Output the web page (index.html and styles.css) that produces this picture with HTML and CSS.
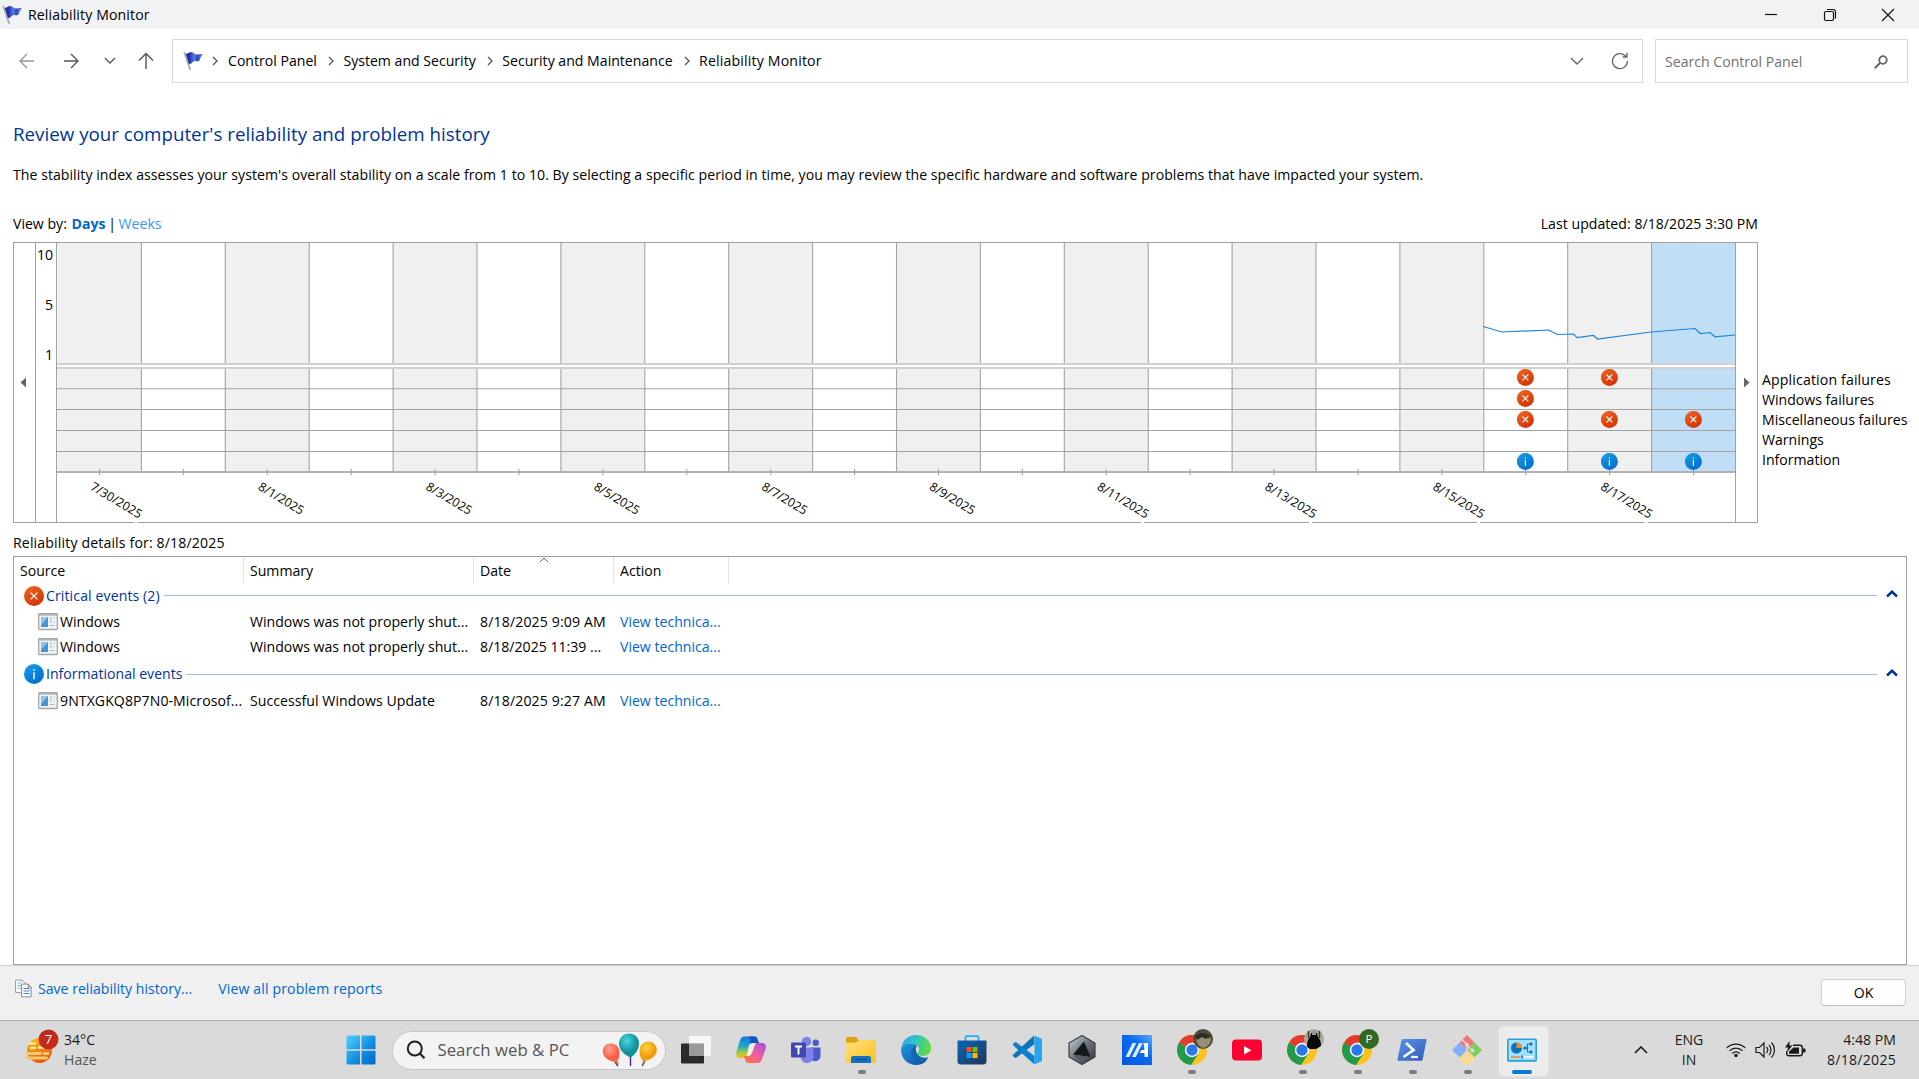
FILE: index.html
```html
<!DOCTYPE html>
<html lang="en">
<head>
<meta charset="utf-8">
<title>Reliability Monitor</title>
<link rel="stylesheet" href="styles.css">
</head>
<body>
<svg class="defs" width="0" height="0" aria-hidden="true">
  <defs>
    <linearGradient id="gFlag" x1="0" x2="1"><stop offset="0" stop-color="#1a2690"/><stop offset=".22" stop-color="#2433b0"/><stop offset=".5" stop-color="#5a7ce6"/><stop offset=".68" stop-color="#2a48c0"/><stop offset="1" stop-color="#6f92f0"/></linearGradient>
    <linearGradient id="gErr" x1="0" y1="0" x2=".6" y2="1"><stop offset="0" stop-color="#f0682c"/><stop offset="1" stop-color="#d43400"/></linearGradient>
    <linearGradient id="gInfo" x1="0" y1="0" x2=".6" y2="1"><stop offset="0" stop-color="#1ba0e8"/><stop offset="1" stop-color="#0070d0"/></linearGradient>
    <linearGradient id="gWin" x1="0" y1="0" x2="1" y2="1"><stop offset="0" stop-color="#4fd3ff"/><stop offset=".55" stop-color="#148fe0"/><stop offset="1" stop-color="#0069c8"/></linearGradient>
    <linearGradient id="gSun" x1="0" y1="0" x2=".3" y2="1"><stop offset="0" stop-color="#fcc010"/><stop offset="1" stop-color="#e8590c"/></linearGradient>
    <linearGradient id="gFolder" x1="0" y1="0" x2="1" y2="1"><stop offset="0" stop-color="#ffe07a"/><stop offset="1" stop-color="#fcc022"/></linearGradient>
    <linearGradient id="gEdge" x1="0" y1="0" x2="1" y2=".3"><stop offset="0" stop-color="#2aa5e8"/><stop offset=".5" stop-color="#2fc3c8"/><stop offset="1" stop-color="#5fd94a"/></linearGradient>
    <linearGradient id="gEdge2" x1="0" y1="0" x2="1" y2="1"><stop offset="0" stop-color="#1a9be0"/><stop offset="1" stop-color="#0c4f9c"/></linearGradient>
    <linearGradient id="gStore" x1="0" y1="0" x2="1" y2="1"><stop offset="0" stop-color="#0a66b8"/><stop offset="1" stop-color="#243558"/></linearGradient>
    <linearGradient id="gCop1" x1="0" y1="0" x2="0" y2="1"><stop offset="0" stop-color="#1279e0"/><stop offset=".45" stop-color="#1aa8c8"/><stop offset=".75" stop-color="#a8c83a"/><stop offset="1" stop-color="#f0c020"/></linearGradient>
    <linearGradient id="gCop2" x1="1" y1="0" x2="0" y2="1"><stop offset="0" stop-color="#9a50e8"/><stop offset=".5" stop-color="#f0609a"/><stop offset="1" stop-color="#ff7a30"/></linearGradient>
    <linearGradient id="gMy" x1="0" y1="1" x2="1" y2="0"><stop offset="0" stop-color="#0058e0"/><stop offset=".6" stop-color="#0a6cf0"/><stop offset="1" stop-color="#58a8ff"/></linearGradient>
    <linearGradient id="gPs" x1="0" y1="0" x2="1" y2="1"><stop offset="0" stop-color="#5b93ec"/><stop offset="1" stop-color="#2f5cb8"/></linearGradient>
    <linearGradient id="gHex" x1="0" y1="0" x2="1" y2="1"><stop offset="0" stop-color="#d0d8e0"/><stop offset=".5" stop-color="#6a727a"/><stop offset="1" stop-color="#2c2e32"/></linearGradient>
    <radialGradient id="gB1" cx=".4" cy=".3"><stop offset="0" stop-color="#ffa090"/><stop offset="1" stop-color="#fa6048"/></radialGradient>
    <radialGradient id="gB2" cx=".4" cy=".3"><stop offset="0" stop-color="#48d8e0"/><stop offset="1" stop-color="#10909c"/></radialGradient>
    <radialGradient id="gB3" cx=".4" cy=".3"><stop offset="0" stop-color="#ffd040"/><stop offset="1" stop-color="#ee9c10"/></radialGradient>
    <symbol id="flag" viewBox="0 0 20 20">
      <path d="M.3 1.200 2 .7 8.200 18.600l-1.800.6z" fill="#aeb0b2"/>
      <path d="M2.800 3C5 2.600 6 .8 8.500.9c2.300.2 2.700 2.300 5 2.500 2 .2 3.800-.7 6.300-.2-.8 1.800-2.200 2.800-2.600 4.400-.4 1.500-.7 2.400-1.500 2.600-1.700.4-3.200-.6-4.700 0-1.700.7-2.600 2.700-5 3.100z" fill="url(#gFlag)"/>
    </symbol>
    <symbol id="err" viewBox="0 0 20 20"><circle cx="10" cy="10" r="10" fill="url(#gErr)"/><path d="M6.600 6.600l6.800 6.800M13.400 6.600l-6.800 6.800" stroke="#fff" stroke-width="1.300"/></symbol>
    <symbol id="info" viewBox="0 0 20 20"><circle cx="10" cy="10" r="10" fill="url(#gInfo)"/><path d="M10 8.300v7M10 5v1.700" stroke="#fff" stroke-width="1.400"/></symbol>
    <symbol id="app" viewBox="0 0 20 18">
      <rect x=".7" y=".7" width="18.600" height="15.800" rx=".8" fill="#f2f3f4" stroke="#a2a6aa" stroke-width="1.300"/><path d="M1 1.800h18" stroke="#b0b3b6" stroke-width="1.600"/><rect x="3" y="4" width="7" height="10" fill="#4794d2"/><path d="M3 4h7L3 12z" fill="#8cc4ee"/><path d="M11.500 5h2.500M11.500 7h2.500M11.500 9h2.500M15.500 5H17M15.500 9H17M11.500 12.500h5.500" stroke="#b4bec8" stroke-width="1.100"/>
    </symbol>
    <symbol id="chrome" viewBox="0 0 30 30">
      <circle cx="15" cy="15" r="15" fill="#fcc31e"/><path d="M15 15 2 7.500a15 15 0 0 0 12 22.460L21.500 18.700z" fill="#229a4c"/><path d="M2 7.500A15 15 0 0 1 28 7.500H15V15z" fill="#e33b2e"/><circle cx="15" cy="15" r="7.200" fill="#fff"/><circle cx="15" cy="15" r="5.700" fill="#2b78ea"/>
    </symbol>
  </defs>
</svg>

<div class="window">
  <header class="titlebar">
    <svg class="title-flag" width="20" height="20"><use href="#flag"/></svg>
    <span class="title">Reliability Monitor</span>
    <div class="controls">
      <svg width="14" height="14" viewBox="0 0 14 14"><path d="M1 6.500h12"/></svg>
      <svg width="14" height="14" viewBox="0 0 14 14"><rect x="1.500" y="3.500" width="9" height="9" rx="1.500"/><path d="M4 1.500h6a2.500 2.500 0 0 1 2.500 2.500v6.500"/></svg>
      <svg width="14" height="14" viewBox="0 0 14 14"><path d="M1 1l12 12M13 1 1 13"/></svg>
    </div>
  </header>

  <nav class="navbar">
    <div class="arrows">
      <svg class="dim" width="16" height="18" viewBox="0 0 16 18"><path d="M15 9H1M8 2 1 9l7 7"/></svg>
      <svg width="16" height="18" viewBox="0 0 16 18"><path d="M1 9h14M8 2l7 7-7 7"/></svg>
      <svg width="12" height="18" viewBox="0 0 12 18"><path d="M1 6l5 5 5-5"/></svg>
      <svg width="16" height="18" viewBox="0 0 16 18"><path d="M8 17V1.500M1 8.500l7-7 7 7"/></svg>
    </div>
    <div class="address">
      <svg width="20" height="20"><use href="#flag"/></svg>
      <svg class="sep s0" width="6" height="10" viewBox="0 0 6 10"><path d="M1 1l4 4-4 4"/></svg>
      <span class="c1">Control Panel</span>
      <svg class="sep" width="6" height="10" viewBox="0 0 6 10"><path d="M1 1l4 4-4 4"/></svg>
      <span class="c2">System and Security</span>
      <svg class="sep" width="6" height="10" viewBox="0 0 6 10"><path d="M1 1l4 4-4 4"/></svg>
      <span class="c3">Security and Maintenance</span>
      <svg class="sep" width="6" height="10" viewBox="0 0 6 10"><path d="M1 1l4 4-4 4"/></svg>
      <span class="c4">Reliability Monitor</span>
      <svg class="drop" width="14" height="8" viewBox="0 0 14 8"><path d="M1 1l6 6 6-6"/></svg>
      <svg class="reload" width="18" height="18" viewBox="0 0 18 18"><path d="M16.500 9A7.500 7.500 0 1 1 14 3.500L16 5M16 .8V5h-4.200"/></svg>
    </div>
    <div class="search"><span>Search Control Panel</span>
      <svg width="14" height="14" viewBox="0 0 14 14"><circle cx="9" cy="5" r="3.800" fill="none" stroke="#666" stroke-width="1.800"/><path d="M6.300 7.700.8 13.200" stroke="#666" stroke-width="2"/></svg>
    </div>
  </nav>

  <main class="content">
    <h1>Review your computer's reliability and problem history</h1>
    <p class="desc">The stability index assesses your system's overall stability on a scale from 1 to 10. By selecting a specific period in time, you may review the specific hardware and software problems that have impacted your system.</p>
    <div class="viewrow">
      <div>View by: <b>Days</b> | <span class="weeks">Weeks</span></div>
      <div class="updated">Last updated: 8/18/2025 3:30 PM</div>
    </div>
    <div class="chartrow">
      <svg class="chart" id="chart" width="1745" height="281" viewBox="13 242 1745 281"></svg>
      <ul class="legend"><li class="wide">Application failures</li><li>Windows failures</li><li>Miscellaneous failures</li><li>Warnings</li><li>Information</li></ul>
    </div>
    <div class="details-label">Reliability details for: 8/18/2025</div>
    <section class="list">
      <div class="row head"><span>Source</span><span>Summary</span><span>Date<svg class="sort" width="10" height="6" viewBox="0 0 10 6"><path d="M1 5l4-4 4 4"/></svg></span><span>Action</span></div>
      <div class="group"><svg width="20" height="20"><use href="#err"/></svg><span class="g1">Critical events (2)</span><i></i><svg class="up" width="12" height="8" viewBox="0 0 12 8"><path d="M1 6.500 6 1.800l5 4.700"/></svg></div>
      <div class="row"><span><svg width="20" height="18"><use href="#app"/></svg>Windows</span><span>Windows was not properly shut...</span><span class="wide">8/18/2025 9:09 AM</span><span class="link">View technica...</span></div>
      <div class="row"><span><svg width="20" height="18"><use href="#app"/></svg>Windows</span><span>Windows was not properly shut...</span><span>8/18/2025 11:39 ...</span><span class="link">View technica...</span></div>
      <div class="group second"><svg width="20" height="20"><use href="#info"/></svg><span class="g2">Informational events</span><i></i><svg class="up" width="12" height="8" viewBox="0 0 12 8"><path d="M1 6.500 6 1.800l5 4.700"/></svg></div>
      <div class="row"><span class="long"><svg width="20" height="18"><use href="#app"/></svg>9NTXGKQ8P7N0-Microsof...</span><span class="upd">Successful Windows Update</span><span class="wide">8/18/2025 9:27 AM</span><span class="link">View technica...</span></div>
    </section>
  </main>

  <footer class="footer">
    <svg width="17" height="19" viewBox="0 0 17 19"><path d="M.6 1.100h6.500l3 3v9.500H.6z" fill="#fff" stroke="#999"/><path d="M2.500 4h4M2.500 6.500h4M2.500 9h4" stroke="#7fb0e6"/><path d="M6.600 5.100h6.500l3 3v9.800H6.600z" fill="#fff" stroke="#888"/><path d="M13 5v3.200h3" fill="none" stroke="#888"/><path d="M8.500 9.500h6M8.500 12h6M8.500 14.500h6" stroke="#3f86dc"/></svg>
    <span class="link save">Save reliability history...</span>
    <span class="link all">View all problem reports</span>
    <button>OK</button>
  </footer>
</div>

<div class="taskbar">
  <div class="weather">
    <svg width="36" height="36" viewBox="0 0 36 36"><circle cx="16.500" cy="21.500" r="12.500" fill="url(#gSun)"/><path d="M7 14.500h5M16 18.500h9M8 19h4" stroke="#ffe9a8" stroke-width="2.600" stroke-linecap="round"/><path d="M3.500 24.500h14M21 24.500h4M3.500 29h20" stroke="#efc878" stroke-width="2.800" stroke-linecap="round"/><circle cx="25.500" cy="10.500" r="10" fill="#c42b1c"/><text x="25.500" y="15" text-anchor="middle" font-size="13" fill="#fff">7</text></svg>
    <div><div>34°C</div><div class="haze">Haze</div></div>
  </div>
  <svg class="start" width="30" height="30" viewBox="0 0 30 30"><path d="M.5 2A1.500 1.500 0 0 1 2 .5h12v13.700H.5zM15.500.5H28A1.500 1.500 0 0 1 29.500 2v12.200h-14zM.5 15.700H14v13.800H2A1.500 1.500 0 0 1 .5 28zM15.500 15.700h14V28a1.500 1.500 0 0 1-1.500 1.500H15.500z" fill="url(#gWin)"/></svg>
  <div class="tsearch">
    <svg width="20" height="20" viewBox="0 0 20 20"><circle cx="8.800" cy="8.500" r="7" fill="none" stroke="#222" stroke-width="2"/><path d="M13.800 13.500l4.700 4.700" stroke="#222" stroke-width="2.300"/></svg>
    <span>Search web &amp; PC</span>
    <svg class="balloons" width="56" height="34" viewBox="0 0 56 34"><path d="M13 29l3 4M28.500 24v9M43 28l-3 5" stroke="#4a2a90" stroke-width="1.400"/><path d="M14.500 28l2.500 2.500-4 .5z" fill="#e0542c"/><path d="M42 27l1 3.500-3-1z" fill="#d8860c"/><path d="M.8 18.500C.8 13.500 4.500 10 9.500 10.500c5 .4 8 4.200 8 9 0 5-1.500 8.500-3 9.500C9 29 .8 25 .8 18.500z" fill="url(#gB1)"/><path d="M54.800 17.500c0-5-3.400-9-8.400-9s-8.900 3.500-8.900 9c0 5.500 2 9.500 4 10.500 6-.5 13.300-4.500 13.300-10.500z" fill="url(#gB3)"/><path d="M37 10.500c0-6-4.500-10-10-10s-10 4.500-10 10c0 6 5 11.500 11.500 14C33 22 37 16.500 37 10.500z" fill="url(#gB2)"/></svg>
  </div>
  <div class="apps">
    <div class="a"><svg width="30" height="30" viewBox="0 0 30 30"><rect x="0" y="8.500" width="23" height="20" rx="1" fill="#2b2b2b"/><rect x="8" y="1" width="22" height="20" rx="1" fill="#fff" opacity=".78"/><path d="M8 8.500h15V21H8z" fill="#9a9a9a"/></svg></div>
    <div class="a"><svg width="30" height="30" viewBox="0 0 30 30"><path d="M8.500 1.500h9.500c2.500 0 3.200 1.500 4 4l1 3h-4c-3 0-4.200 1.600-5 4.200L11.500 19c-1 3-2 4-4.500 4H4c-3.500 0-4.600-2.500-3.600-6L4 5.500C5 2.700 6 1.500 8.500 1.500z" fill="url(#gCop1)"/><path d="M13 1.500h5c2.500 0 3.200 1.500 4 4l1 3h-4c-2 0-3 .5-4 2z" fill="#1850c8"/><path d="M21.500 28H13c-2.500 0-3.500-1.500-4.200-4L8 21h3.500c3 0 4-1.500 4.800-4.200L18.300 11c.8-2.500 1.700-3 4.200-3H26c3.500 0 4.600 2.500 3.600 6L26 24c-1 2.700-2 4-4.500 4z" fill="url(#gCop2)"/><path d="M13 10.500c.8-2 2.500-2.500 5-2.500l2.500.3c-1.200.6-1.800 1.600-2.200 2.700l-2 5.800c-.8 2.700-1.800 4-4.300 4.200l-1.500-.5z" fill="#f0eee8"/></svg></div>
    <div class="a"><svg width="30" height="30" viewBox="0 0 30 30"><circle cx="15.500" cy="6.500" r="4.700" fill="#7b83eb"/><circle cx="24.800" cy="7.800" r="3.200" fill="#5059c9"/><path d="M20 12.500h9.500v9a5.500 5.500 0 0 1-9.500 3z" fill="#5059c9"/><path d="M10 12.500h12.500V22a6.500 6.500 0 0 1-12.500 2z" fill="#7b83eb"/><rect x="0" y="7.500" width="15" height="15" rx="1.200" fill="#4048b0"/><path d="M4 11.500h7M7.500 11.500v8" stroke="#fff" stroke-width="1.900"/></svg></div>
    <div class="a run"><svg width="30" height="30" viewBox="0 0 30 30"><path d="M0 3.500A1.500 1.500 0 0 1 1.500 2h8.500l3 3.500H24v5H0z" fill="#e0a010"/><path d="M0 7.500h10L13 5h15.500A1.500 1.500 0 0 1 30 6.500v20a1.500 1.500 0 0 1-1.500 1.500h-27A1.500 1.500 0 0 1 0 26.500z" fill="url(#gFolder)"/><path d="M5 28v-5a2 2 0 0 1 2-2h16a2 2 0 0 1 2 2v5z" fill="#1474c4"/><path d="M9 24.500h12" stroke="#0c4c8c" stroke-width="1.300"/></svg></div>
    <div class="a"><svg width="30" height="30" viewBox="0 0 30 30"><path d="M.3 13C1.500 5 7.500 0 15 0c8.500 0 15 6 15 13 0 5-3.500 8-8 8-3 0-5.500-1-5.500-2.500 0-1 1.500-1.700 1.500-4C18 11 14.500 8.500 10 8.500c-5 0-8.500 2-9.700 4.500z" fill="url(#gEdge)"/><path d="M.1 14C1 10.500 5 8.300 10 8.500c2.500 0 4.500.7 6 2-3.500.3-5 3-5 6 0 6 6 9.500 11 8.500 2-.4 3.500-1.200 5-2C25 27.500 20.500 30 15 30 6.500 30-.5 23 .1 14z" fill="url(#gEdge2)"/><path d="M16 10.500c-4 0-6.500 4-5.500 8.500 1 5.500 6.500 8 11.500 6.500 2-.5 4-1.500 5.200-3.500-2.500 1-5.200.8-7.400-.2C15.500 20 13.500 14.500 16 10.500z" fill="#1465ae"/></svg></div>
    <div class="a"><svg width="30" height="30" viewBox="0 0 30 30"><path d="M8.500 7V2.500A1.300 1.300 0 0 1 9.800 1.200h10.400a1.300 1.300 0 0 1 1.300 1.300V7" fill="none" stroke="#22b0f0" stroke-width="1.700"/><path d="M.5 5.500h29V26a3.500 3.500 0 0 1-3.500 3.500H4A3.500 3.500 0 0 1 .5 26z" fill="url(#gStore)"/><path d="M9.500 12h5v5h-5z" fill="#f25022"/><path d="M15.500 12h5v5h-5z" fill="#7fba00"/><path d="M9.500 18h5v5h-5z" fill="#00a4ef"/><path d="M15.500 18h5v5h-5z" fill="#ffb900"/></svg></div>
    <div class="a"><svg width="30" height="30" viewBox="0 0 30 30"><path d="M22 .5 3.500 17.500.5 20.500l2 2c.6.5 1.400.4 2 0L22.500 9z" fill="#0b74bc"/><path d="M22.500 29.500 3.500 12.500.5 9.500l2-2c.6-.5 1.400-.4 2 0L22.500 21z" fill="#0c80cc"/><path d="M21.500.3 30 4v22l-8.500 3.800c1 .3 1-1 1-1.800V2c0-1 0-2-1-1.700z" fill="#23a5f2"/></svg></div>
    <div class="a"><svg width="30" height="30" viewBox="0 0 30 30"><path d="M15 .5 28 8v14l-13 7.500L2 22V8z" fill="url(#gHex)" stroke="#3a3e44" stroke-width="1.200"/><path d="M17 6.500 23.500 22 6 19.500z" fill="#15171a"/><path d="M6 19.500l17.500 2.500-9 5z" fill="#555b61"/></svg></div>
    <div class="a"><svg width="30" height="30" viewBox="0 0 30 30"><path d="M0 0h30v30H0z" fill="url(#gMy)"/><path d="M3.500 22 10.500 8h3.800l-7 14zM10 22l7-14h3.800l-7 14z" fill="#dcebff"/><path d="M21.500 8h4.500v14h-3.500v-4h-5l2-3h3z" fill="#fff"/></svg></div>
    <div class="a run"><svg width="30" height="30"><use href="#chrome"/></svg><svg class="badge" width="20" height="20" viewBox="0 0 20 20"><circle cx="10" cy="10" r="10" fill="#4c4a38"/><path d="M3 10q3-4 7-2t8 1q0 8-8 10-6-2-7-9z" fill="#9a8d76"/><path d="M2 7q8-6 15 0l-4 3-4-2-5 3z" fill="#2e2c24"/></svg></div>
    <div class="a"><svg width="30" height="30" viewBox="0 0 30 30"><rect x="0" y="4.500" width="30" height="21" rx="4" fill="#ff0033"/><path d="M12 11v8.500l7.500-4.200z" fill="#fff"/></svg></div>
    <div class="a run"><svg width="30" height="30"><use href="#chrome"/></svg><svg class="badge" width="20" height="20" viewBox="0 0 20 20"><circle cx="10" cy="10" r="10" fill="#b0a89e"/><path d="M3 18q0-7 3-10l1-4h6l1 4q3 3 3 9l-5 3H6z" fill="#080808"/><path d="M4.500 2v7M15.500 2v7" stroke="#3a3834" stroke-width="1.500"/><path d="M8 2h4v4H8z" fill="#999"/></svg></div>
    <div class="a run"><svg width="30" height="30"><use href="#chrome"/></svg><svg class="badge" width="20" height="20" viewBox="0 0 20 20"><circle cx="10" cy="10" r="10" fill="#33691e"/><text x="10" y="14.200" text-anchor="middle" font-size="11.500" fill="#fff">P</text></svg></div>
    <div class="a run"><svg width="30" height="30" viewBox="0 0 30 30"><path d="M5.500 4h23a1 1 0 0 1 1 1.200L25.500 25a1 1 0 0 1-1 .8H1.500a1 1 0 0 1-1-1.200L4.500 5a1 1 0 0 1 1-1z" fill="url(#gPs)"/><path d="M9 8l7.500 7L6.500 22" fill="none" stroke="#fff" stroke-width="2.600"/><path d="M14 22h7" stroke="#fff" stroke-width="2.200"/></svg></div>
    <div class="a run"><svg width="30" height="30" viewBox="0 0 30 30"><path d="M15 0 22.500 7.500 15 15 7.500 7.500z" fill="#f0767a"/><path d="M30 15l-7.500 7.500L15 15l7.500-7.500z" fill="#80cc58"/><path d="M15 30 7.500 22.500 15 15l7.500 7.500z" fill="#ffdc78"/><path d="M0 15l7.500-7.500L15 15l-7.500 7.500z" fill="#84b0fa"/><path d="M10 4.500l5 5v12M15 10.500l5 4.500" fill="none" stroke="#dadada" stroke-width="1.600"/><circle cx="15" cy="10" r="2" fill="#dadada"/><circle cx="15" cy="21.500" r="2" fill="#dadada"/><circle cx="20.500" cy="15.500" r="2" fill="#dadada"/></svg></div>
    <div class="a active"><svg width="30" height="30" viewBox="0 0 30 30"><rect x=".8" y="4.300" width="28.400" height="21.600" rx="1" fill="#9fe0fa" stroke="#2a9fd8" stroke-width="1.600"/><circle cx="9.500" cy="13" r="5.500" fill="#0f6fc4"/><path d="M9.500 13V7.500A5.500 5.500 0 0 1 15 13z" fill="#f0921e"/><path d="M17 13h3.500M20.500 9v8M20.500 9h3M20.500 17h3" fill="none" stroke="#2070b0" stroke-width="1.100"/><circle cx="24" cy="9" r="1.600" fill="#1a6db8"/><circle cx="24" cy="17" r="1.600" fill="#1a6db8"/><circle cx="18" cy="13" r="1.600" fill="#1a6db8"/><path d="M4 22h9" stroke="#f0921e" stroke-width="1.600"/><path d="M17 22h9" stroke="#fff" stroke-width="1.600"/><path d="M15 20.500v3" stroke="#1a6db8" stroke-width="1.600"/></svg></div>
  </div>
  <div class="tray">
    <svg class="caret" width="14" height="8" viewBox="0 0 14 8"><path d="M1 7l6-6 6 6" fill="none" stroke="#1b1b1b" stroke-width="1.600"/></svg>
    <div class="lang"><div>ENG</div><div>IN</div></div>
    <svg class="wifi" width="20" height="16" viewBox="0 0 20 16"><path d="M.8 6a13 13 0 0 1 18.400 0M3.500 8.800a9.200 9.200 0 0 1 13 0M6.200 11.500a5.400 5.400 0 0 1 7.600 0" fill="none" stroke="#1b1b1b" stroke-width="1.200"/><circle cx="10" cy="13.500" r="1.700" fill="#1b1b1b"/></svg>
    <svg class="vol" width="21" height="18" viewBox="0 0 21 18"><path d="M1 6.500h3.500L9 2v14l-4.500-4.500H1z" fill="none" stroke="#1b1b1b" stroke-width="1.200"/><path d="M11.500 6a4.500 4.500 0 0 1 0 6M14 3.800a7.800 7.800 0 0 1 0 10.400M16.500 1.500a11 11 0 0 1 0 15" fill="none" stroke="#1b1b1b" stroke-width="1.200"/></svg>
    <svg class="bat" width="21" height="18" viewBox="0 0 21 18"><path d="M8 4.200h7a2.300 2.300 0 0 1 2.300 2.300v6a2.300 2.300 0 0 1-2.300 2.300H4a2.300 2.300 0 0 1-2.300-2.300V10" fill="none" stroke="#1b1b1b" stroke-width="1.400"/><path d="M18 7.500h1.500a1 1 0 0 1 1 1v2a1 1 0 0 1-1 1H18z" fill="#1b1b1b"/><path d="M8.500 6.500H14v6.300H4V10.500z" fill="#1b1b1b"/><path d="M4.500 0 0 6.500h3L2 11l5.500-6.500h-3z" fill="#1b1b1b"/></svg>
    <div class="clock"><div class="time">4:48 PM</div><div class="day">8/18/2025</div></div>
  </div>
</div>
<script src="chart.js"></script>
</body>
</html>
```
FILE: chart.js
```js
const NS = 'http://www.w3.org/2000/svg';
const chart = document.getElementById('chart');
const X0 = 57.4, STEP = 83.9, COLS = 20;

function add(tag, attrs, text) {
  const el = document.createElementNS(NS, tag);
  for (const k in attrs) el.setAttribute(k, attrs[k]);
  if (text) el.textContent = text;
  chart.appendChild(el);
}
function line(x1, y1, x2, y2, cls) { add('path', { d: `M${x1} ${y1}L${x2} ${y2}`, class: cls }); }

// Alternating day columns; the last one is selected.
for (let i = 0; i < COLS; i++) {
  const fill = i === COLS - 1 ? '#c0def6' : i % 2 === 0 ? '#f0f0f0' : '#fff';
  const x = X0 + i * STEP;
  add('rect', { x, y: 243, width: STEP, height: 121, fill });
  add('rect', { x, y: 368, width: STEP, height: 104, fill });
  if (i > 0) {
    line(x + 0.1, 243, x + 0.1, 364, 'grid');
    line(x + 0.1, 368, x + 0.1, 472, 'grid');
  }
}
[388.8, 409.5, 430.5, 451.5].forEach(y => line(57, y, 1735, y, 'grid'));
[364, 368].forEach(y => line(57, y, 1735, y, 'soft'));
line(57, 472, 1735, 472, 'axis');
for (let i = 0; i < COLS; i++) line(X0 + 42.1 + i * STEP, 469, X0 + 42.1 + i * STEP, 475, 'grid');

// Frame and scroll strips
add('rect', { x: 13.5, y: 242.5, width: 1744, height: 280, class: 'frame' });
[35.5, 56.5, 1735.5].forEach(x => line(x, 242, x, 523, 'frame'));
add('path', { d: 'M26 377.5v10l-5.500-5z', fill: '#666' });
add('path', { d: 'M1744 377.500v10l5.500-5z', fill: '#666' });

add('text', { x: 53, y: 259.5, class: 'scale' }, '10');
add('text', { x: 53, y: 309.5, class: 'scale' }, '5');
add('text', { x: 53, y: 359.5, class: 'scale' }, '1');

['7/30', '8/1', '8/3', '8/5', '8/7', '8/9', '8/11', '8/13', '8/15', '8/17'].forEach((d, i) => {
  const x = 89.5 + i * STEP * 2;
  add('text', { transform: `translate(${x} 489) rotate(31)`, class: 'date' }, d + '/2025');
  if (d.length > 3) add('rect', { x: x + 45, y: 522, width: 3, height: 1, fill: '#fff' });
});

add('polyline', { class: 'trend', points: '1483,326.5 1502,332 1548.500,330 1557.500,334.500 1573.500,334 1577,337.700 1593.500,335.500 1597.500,339 1651,332 1695,328.500 1700.300,333.500 1710,332.500 1715,336.800 1735,335' });

[['err', 1525.4, 377.4], ['err', 1609.4, 377.4], ['err', 1525.4, 398.4], ['err', 1525.4, 419.4], ['err', 1609.4, 419.4], ['err', 1693.4, 419.4],
 ['info', 1525.4, 461.4], ['info', 1609.4, 461.4], ['info', 1693.4, 461.4]]
  .forEach(([id, x, y]) => add('use', { href: '#' + id, x: x - 8.5, y: y - 8.5, width: 17, height: 17 }));
```
FILE: styles.css
```css
* { box-sizing: border-box; }
body { margin: 0; width: 1919px; height: 1079px; overflow: hidden; background: #fff; color: #000; font: 14.1px/20px "Open Sans", "Noto Sans", sans-serif; display: flex; flex-direction: column; white-space: nowrap; }
.defs { position: absolute; }
svg { flex: none; display: block; }
.window { height: 1020px; display: flex; flex-direction: column; }
.titlebar { height: 29px; background: #f1f2f3; display: flex; align-items: center; padding: 0 24px 0 2px; }
.title { margin-left: 6px; letter-spacing: .13px; }
.controls { margin-left: auto; display: flex; gap: 44.500px; fill: none; stroke: #111; stroke-width: 1.2; }
.navbar { height: 55px; padding: 10px 11px 0 19px; display: flex; }
.arrows { width: 153px; display: flex; height: 44px; align-items: center; fill: none; stroke: #555; stroke-width: 1.4; }
.arrows svg:nth-child(2) { margin-left: 28px; }
.arrows svg:nth-child(3) { margin-left: 25px; }
.arrows svg:nth-child(4) { margin-left: 22px; }
.arrows .dim { stroke: #999; }
.address { width: 1471px; height: 44px; border: 1px solid #d9d9d9; display: flex; align-items: center; padding-left: 10px; }
.sep { fill: none; stroke: #555; stroke-width: 1.3; margin: 0 9.500px 0 11px; }
.s0 { margin: 0 10px 0 9px; }
.c4 { letter-spacing: .18px; }
.drop { margin-left: auto; fill: none; stroke: #666; stroke-width: 1.4; }
.reload { margin: 0 13px 0 27px; fill: none; stroke: #666; stroke-width: 1.3; }
.search { margin-left: 12px; width: 253px; height: 44px; border: 1px solid #d9d9d9; display: flex; align-items: center; justify-content: space-between; padding: 1px 19px 0 9px; color: #717171; }
.content { padding: 0 12px 0 13px; height: 881px; }
h1 { margin: 38px 0 0; font-size: 18.750px; line-height: 24px; font-weight: 400; color: #003399; }
.desc { margin: 19px 0 0; letter-spacing: .042px; }
.viewrow { margin-top: 29px; display: flex; justify-content: space-between; width: 1745px; }
.viewrow b { color: #0066cc; margin: 0 -1px 0 1px; }
.weeks { color: #3399ff; margin-left: -1px; }
.updated { letter-spacing: .03px; }
.chartrow { display: flex; margin-top: 8px; }
.legend { list-style: none; margin: 128px 0 0 4px; padding: 0; }
.legend .wide { letter-spacing: .15px; }
.chart text { font-family: "Open Sans", "Noto Sans", sans-serif; }
.grid { stroke: #a3a3a3; stroke-width: 1.1; fill: none; }
.soft { stroke: #d0d0d0; stroke-width: 2; }
.axis { stroke: #b2b2b2; stroke-width: 2; }
.frame { stroke: #a0a0a0; stroke-width: 1; fill: none; }
.scale { font-size: 14.1px; text-anchor: end; }
.date { font-size: 12.200px; }
.trend { fill: none; stroke: #1a86dc; stroke-width: 1.2; }
.details-label { margin-top: 10px; letter-spacing: .15px; }
.list { margin-top: 3px; height: 409px; border: 1px solid #a0a0a0; }
.row { display: grid; grid-template-columns: 230px 230px 140px 115px; height: 25px; align-items: center; }
.row > span { display: flex; align-items: center; padding-left: 6px; height: 100%; position: relative; }
.row:not(.head) > span:first-child { padding-left: 24px; }
.row span svg { margin-right: 2px; }
.row > .wide { letter-spacing: .14px; }
.row > .long { letter-spacing: .07px; }
.row > .upd { letter-spacing: .05px; }
.row.head { height: 27px; }
.row.head > span { border-right: 1px solid #e3e3e3; }
.row .sort { position: absolute; left: 65px; top: 0; fill: none; stroke: #666; }
.group { display: flex; align-items: center; height: 23px; margin-bottom: 2px; padding: 0 8px 0 10px; color: #003399; }
.group span { margin: 0 4px 0 2px; }
.g1 { letter-spacing: .1px; }
.group i { flex: 1; height: 1px; background: #aab8e0; }
.group .up { margin: -3px 0 0 9px; fill: none; stroke: #003399; stroke-width: 2.5; }
.group.second { height: 29px; margin: 0; padding-top: 1px; }
.link { color: #0066cc; }
.footer { height: 55px; background: #f0f0f0; border-top: 1px solid #d0d0d0; display: flex; padding: 13px 13px 0 15px; }
.save { margin-left: 6px; }
.all { margin-left: 26px; letter-spacing: .13px; }
.footer button { margin: 0 0 0 auto; width: 85px; height: 27px; border: 1px solid #d0d0d0; border-bottom-color: #bbb; border-radius: 4px; background: #fdfdfd; font: inherit; padding: 0; }
.taskbar { height: 59px; background: #dadada; border-top: 1px solid #adadad; display: flex; align-items: center; color: #1b1b1b; }
.taskbar text { font-family: "Open Sans", sans-serif; }
.weather { display: flex; width: 345.500px; padding-left: 23px; align-items: center; gap: 5px; }
.weather > svg { margin-top: -6px; }
.haze { color: #555; }
.tsearch { margin-left: 16px; width: 274px; height: 39px; background: #f3f3f3; border: 1px solid #c6c6c6; border-radius: 20px; display: flex; align-items: center; padding: 0 7px 0 13px; font-size: 16.800px; color: #555; }
.tsearch span { margin-left: 12px; }
.balloons { margin-left: auto; }
.apps { display: flex; margin-left: 3px; }
.a { width: 55.100px; height: 58px; display: flex; align-items: center; justify-content: center; position: relative; }
.run::after { content: ""; position: absolute; bottom: 5px; left: 24px; width: 8px; height: 4px; border-radius: 2px; background: #7c7c7c; }
.badge { position: absolute; left: 29px; top: 8px; }
.active::before { content: ""; position: absolute; left: 3px; top: 5px; width: 49px; height: 49px; border-radius: 5px; background: #ececec; border: 1px solid #e2e2e2; }
.active svg { position: relative; }
.active::after { content: ""; position: absolute; bottom: 5px; left: 17px; width: 20px; height: 4px; border-radius: 2px; background: #0a78d4; }
.tray { margin-left: auto; padding-right: 23px; display: flex; align-items: center; text-align: right; }
.lang { text-align: center; margin-left: 25px; width: 32px; }
.wifi { margin-left: 21px; }
.vol { margin-left: 9px; }
.bat { margin-left: 9px; }
.clock { width: 90px; }
.day { letter-spacing: .25px; }
```
